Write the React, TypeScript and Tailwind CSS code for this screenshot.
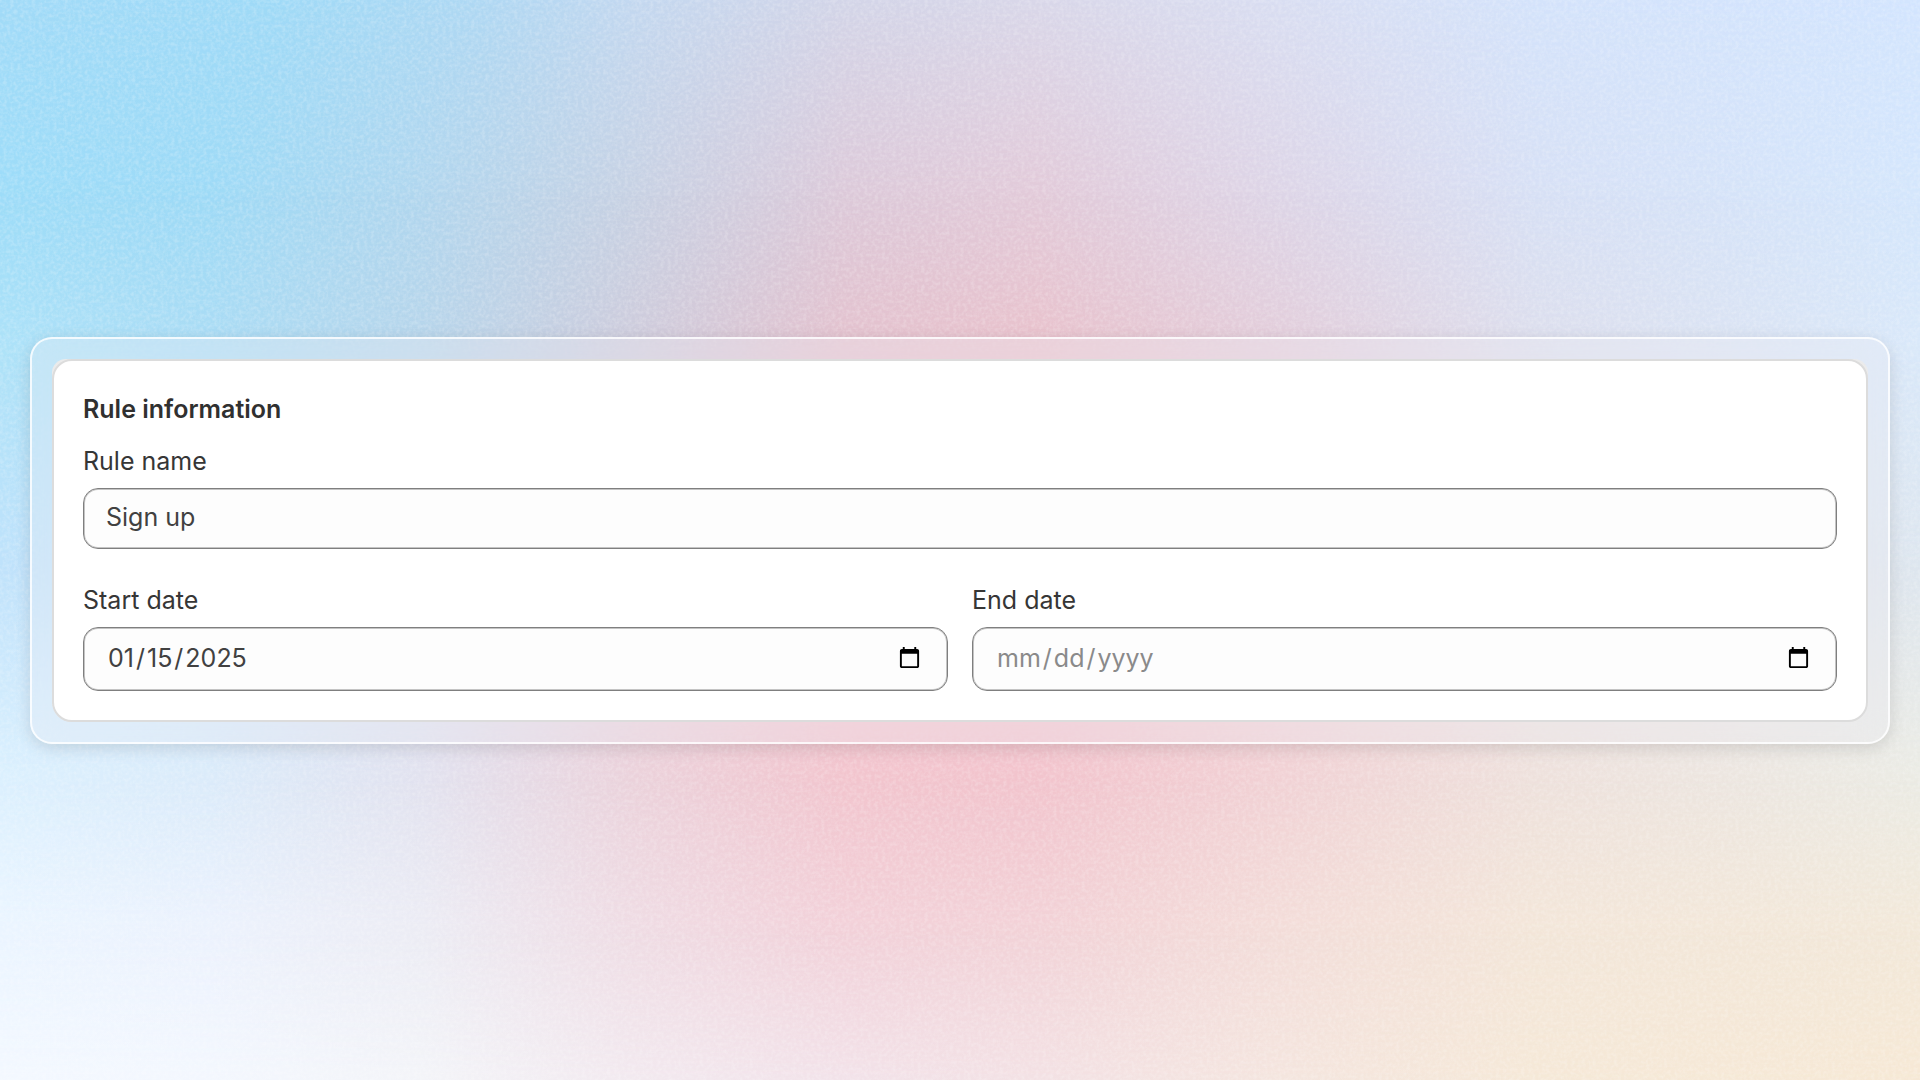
import React, { useState } from "react";

const band = "absolute inset-0";

function Wallpaper() {
  return (
    <div aria-hidden="true" className="absolute inset-0 overflow-hidden">
      <div className={`${band} bg-[linear-gradient(90deg,#a2dbf8_0%,#9fdaf7_14%,#afd8f3_25%,#c3d8f0_33%,#d3d5e8_44%,#d9d7e9_54%,#d9def2_67%,#d4e3fb_80%,#d3e5fe_100%)]`} />
      <div className={`${band} bg-[linear-gradient(90deg,#9ddcf8_0%,#9edaf6_11%,#b1d6ee_22%,#c7d1e3_33%,#dcc9d9_44%,#e2cad9_54%,#ddd5e7_67%,#d7e0f5_80%,#d4e6fc_100%)] [mask-image:linear-gradient(180deg,transparent_0%,black_18%)]`} />
      <div className={`${band} bg-[linear-gradient(90deg,#aee2f8_0%,#acdcf4_11%,#b8d5ea_22%,#cfcbdb_33%,#e4c1cd_44%,#e9c1cb_54%,#e3cdda_67%,#dddeec_80%,#d9e8f9_100%)] [mask-image:linear-gradient(180deg,transparent_18%,black_33%)]`} />
      <div className={`${band} bg-[linear-gradient(90deg,#bfe2fb_0%,#c4e0f5_11%,#d1d7e8_22%,#e2c9d6_33%,#edbfca_44%,#efbfc9_54%,#eacad2_67%,#e3dae0_80%,#dde6ef_100%)] [mask-image:linear-gradient(180deg,transparent_33%,black_52%)]`} />
      <div className={`${band} bg-[linear-gradient(90deg,#dbf0fe_0%,#dbebfa_11%,#e2e2ef_22%,#ebd2db_33%,#f2c5ce_44%,#f2c4cd_54%,#f1d2d5_67%,#eee1dc_80%,#ebebe4_100%)] [mask-image:linear-gradient(180deg,transparent_52%,black_72%)]`} />
      <div className={`${band} bg-[linear-gradient(90deg,#ebf5ff_0%,#ecf2fd_11%,#ececf4_22%,#efdce4_33%,#f2d1d9_44%,#f2d2d7_54%,#f3ddd9_67%,#f3e6d9_80%,#f2e8d9_100%)] [mask-image:linear-gradient(180deg,transparent_72%,black_86%)]`} />
      <div className={`${band} bg-[linear-gradient(90deg,#f3f8ff_0%,#f3f7fe_11%,#f3f4f8_22%,#f2e9ef_33%,#f2e2e9_44%,#f3e1e4_54%,#f4e5de_67%,#f5e8d7_80%,#f6e8d5_100%)] [mask-image:linear-gradient(180deg,transparent_86%,black_100%)]`} />
      <svg className="absolute inset-0 h-full w-full opacity-20">
        <filter id="grain" x="0" y="0" width="100%" height="100%">
          <feTurbulence type="fractalNoise" baseFrequency="0.28" numOctaves="2" seed="4" />
          <feColorMatrix values="0 0 0 0 1  0 0 0 0 1  0 0 0 0 1  2.4 0 0 0 -0.9" />
        </filter>
        <rect width="100%" height="100%" filter="url(#grain)" />
      </svg>
    </div>
  );
}

type FieldProps = {
  id: string;
  label: string;
  type?: string;
  value: string;
  onChange: (value: string) => void;
};

function Field({ id, label, type = "text", value, onChange }: FieldProps) {
  const shape =
    type === "date"
      ? "h-16 pl-[23px] pr-[23px] [&::-webkit-datetime-edit-text]:px-px"
      : "h-[61px] px-[22px] pb-[3px]";
  const tone = type === "date" && !value ? "text-[#8a8a8a]" : "text-[#414141]";
  return (
    <div className="flex min-w-0 flex-col gap-[9px]">
      <label htmlFor={id} className="text-[25px] leading-[36px] text-[#363636]">
        {label}
      </label>
      <input
        id={id}
        type={type}
        value={value}
        onChange={(e) => onChange(e.target.value)}
        className={`w-full rounded-[15px] border border-[#7f7f7f] bg-[#fdfdfd] text-[25px] shadow-[inset_0_0_0_1px_#c4c4c4] outline-none ${shape} ${tone}`}
      />
    </div>
  );
}

export default function App() {
  const [name, setName] = useState("Sign up");
  const [start, setStart] = useState("2025-01-15");
  const [end, setEnd] = useState("");

  return (
    <main className="relative flex min-h-screen items-center px-[30px] font-['Inter',sans-serif]">
      <Wallpaper />
      <div className="relative w-full rounded-[22px] border-2 border-white/80 bg-[#f0f0f4]/30 p-5 shadow-[0_4px_16px_rgba(0,0,0,0.12)] backdrop-blur-lg">
        <div className="rounded-t-[14px] rounded-b-[20px] bg-[#ebebeb]">
          <form className="flex flex-col rounded-[20px] border-2 border-[#dcdcdc] bg-white px-[29px] pt-[30px] pb-[29px]">
            <h2 className="text-[25px] leading-[36px] font-semibold text-[#303030]">Rule information</h2>
            <div className="mt-4">
              <Field id="rule-name" label="Rule name" value={name} onChange={setName} />
            </div>
            <div className="mt-[33px] grid grid-cols-2 gap-6">
              <Field id="start-date" label="Start date" type="date" value={start} onChange={setStart} />
              <Field id="end-date" label="End date" type="date" value={end} onChange={setEnd} />
            </div>
          </form>
        </div>
      </div>
    </main>
  );
}
